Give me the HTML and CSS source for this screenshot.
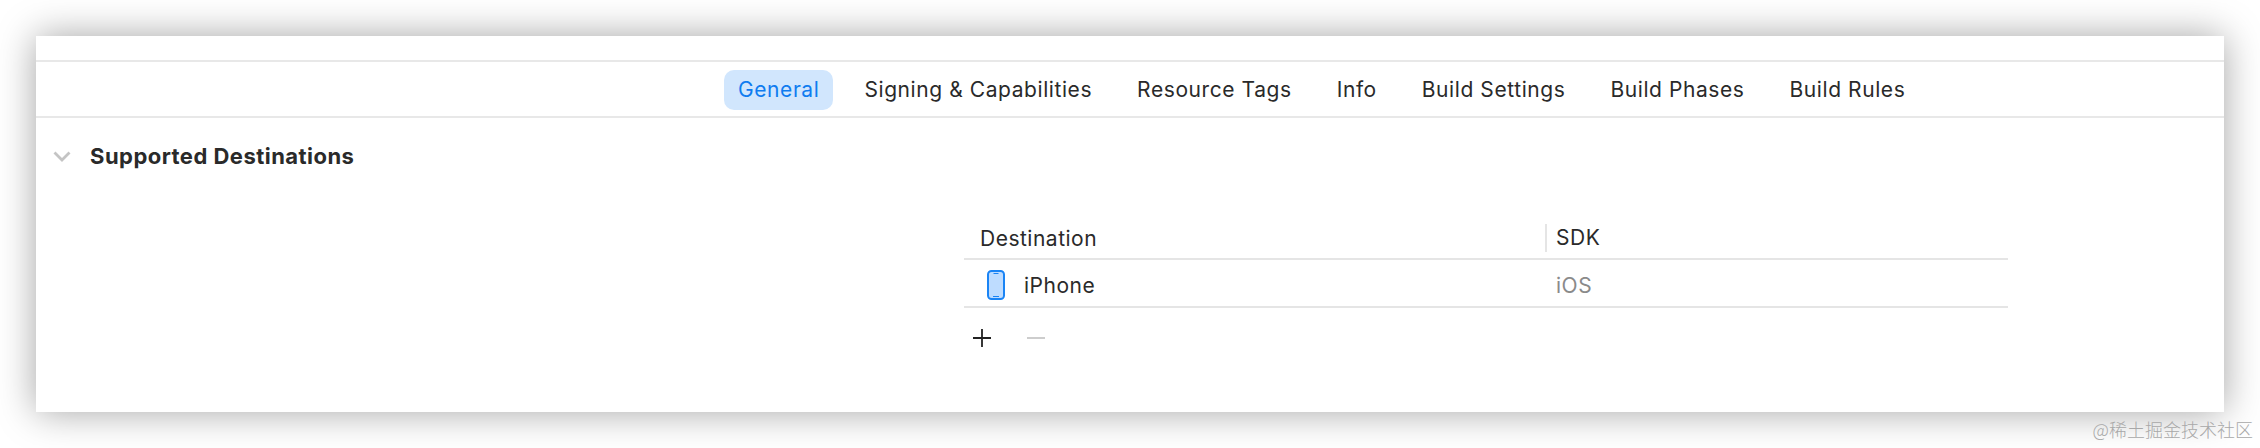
FILE: index.html
```html
<!DOCTYPE html>
<html lang="en">
<head>
<meta charset="utf-8">
<title>Supported Destinations</title>
<link rel="stylesheet" href="styles.css">
</head>
<body>
<main class="window">
  <div class="toolbar"></div>
  <nav class="tabs">
    <span class="tab active">General</span>
    <span class="tab">Signing &amp; Capabilities</span>
    <span class="tab">Resource Tags</span>
    <span class="tab">Info</span>
    <span class="tab">Build Settings</span>
    <span class="tab">Build Phases</span>
    <span class="tab">Build Rules</span>
  </nav>
  <section class="section">
    <header class="section-head">
      <svg class="chevron" width="18" height="11" viewBox="0 0 18 11"><path d="M1.500 1.500 9 9l7.500-7.500" fill="none" stroke="#c4c4c4" stroke-width="2.800"/></svg>
      <h2 class="section-title">Supported Destinations</h2>
    </header>
    <div class="table">
      <div class="row head-row">
        <div class="cell-dest head-dest">Destination</div>
        <div class="cell-sdk head-sdk">SDK</div>
      </div>
      <div class="row body-row">
        <div class="cell-dest">
          <svg class="phone" width="18" height="30" viewBox="0 0 18 30"><rect x="1" y="1" width="16" height="28" rx="3.500" fill="#bedcff" stroke="#1a84f5" stroke-width="2"/><path d="M6.500 3.500h5M6 26.500h6" stroke="#1a84f5" stroke-width="1.200"/></svg>
          <span>iPhone</span>
        </div>
        <div class="cell-sdk muted">iOS</div>
      </div>
      <div class="actions">
        <svg width="18" height="18" viewBox="0 0 18 18"><path d="M9 0v18M0 9h18" stroke="#222" stroke-width="1.800"/></svg>
        <svg width="18" height="18" viewBox="0 0 18 18"><path d="M0 9h18" stroke="#c8c8c8" stroke-width="1.800"/></svg>
      </div>
    </div>
  </section>
</main>
<div class="watermark">@稀土掘金技术社区</div>
</body>
</html>
```

FILE: styles.css
```css
html, body {
  margin: 0;
  height: 448px;
  overflow: hidden;
  background: #fff;
}
body {
  position: relative;
  padding: 36px;
  box-sizing: border-box;
  font-family: Inter, "Noto Sans CJK SC", sans-serif;
  color: #2a2a2a;
}
.window {
  height: 376px;
  background: #fff;
  box-shadow: 0 0 36px rgba(0, 0, 0, 0.36);
}
.toolbar {
  height: 24px;
  border-bottom: 2px solid #e8e8e8;
}
.tabs {
  height: 52px;
  padding: 2px 0 0 688px;
  border-bottom: 2px solid #e8e8e8;
  display: flex;
  align-items: center;
  gap: 17px;
  font-size: 21px;
  letter-spacing: 0.58px;
  line-height: 40px;
}
.tab {
  padding: 0 14px;
  border-radius: 10px;
}
.tab.active {
  background: #d1e6fd;
  color: #0f7cf0;
}
.section {
  display: flex;
  flex-direction: column;
}
.section-head {
  display: flex;
  align-items: center;
  height: 36px;
  margin-top: 20px;
  padding-left: 17px;
  gap: 19px;
}
.section-title {
  margin: 0;
  font-size: 22px;
  letter-spacing: 0.47px;
  font-weight: 700;
}
.table {
  margin: 44px 0 0 928px;
  width: 1044px;
  font-size: 21px;
  letter-spacing: 0.5px;
}
.row {
  display: flex;
  border-bottom: 2px solid #e5e5e5;
  box-sizing: border-box;
}
.head-row {
  height: 42px;
  padding-top: 6px;
  align-items: flex-start;
}
.body-row {
  height: 48px;
  padding-top: 4px;
  align-items: center;
}
.cell-dest {
  width: 581px;
  padding-left: 16px;
  box-sizing: border-box;
  display: flex;
  align-items: center;
  gap: 19px;
}
.head-dest {
  height: 28px;
}
.head-sdk {
  height: 28px;
  border-left: 2px solid #e5e5e5;
  padding-left: 9px;
  line-height: 28px;
}
.phone {
  margin-left: 7px;
}
.body-row .cell-sdk {
  padding-left: 11px;
}
.muted {
  color: #8a8a8a;
}
.actions {
  display: flex;
  gap: 36px;
  padding: 21px 0 0 9px;
}
.watermark {
  position: absolute;
  right: 7px;
  bottom: 6px;
  font-size: 18px;
  color: #a8a8a8;
  font-family: "Noto Sans CJK SC", sans-serif;
  font-weight: 300;
}
```
